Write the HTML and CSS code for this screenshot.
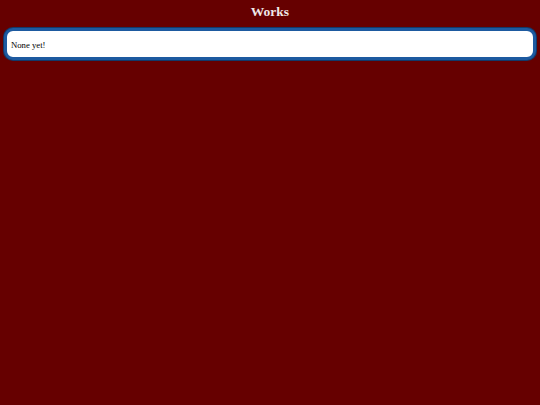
FILE: index.html
```html
<!DOCTYPE html>
<html>
<head>
<meta charset="utf-8">
<link rel="stylesheet" href="styles.css">
</head>
<body>
<h1 class="title">Works</h1>
<div class="box">None yet!</div>
</body>
</html>
```
FILE: styles.css
```css
html, body {
  margin: 0;
  padding: 0;
  background: #660000;
}
body {
  padding: 4px 4px;
  font-family: "Liberation Serif", "Times New Roman", serif;
}
.title {
  margin: 0;
  height: 20px;
  line-height: 16px;
  text-align: center;
  color: #f0e8e8;
  font-size: 13.5px;
  font-weight: bold;
}
.box {
  margin-top: 4px;
  height: 24px;
  box-sizing: content-box;
  background: #ffffff;
  border: 3px solid #1d5aa0;
  box-shadow: 0 0 0 1px #123a6a;
  border-radius: 9px;
  padding: 2px 4px 0;
  display: flex;
  align-items: center;
  font-size: 8.7px;
  color: #000;
}
```
